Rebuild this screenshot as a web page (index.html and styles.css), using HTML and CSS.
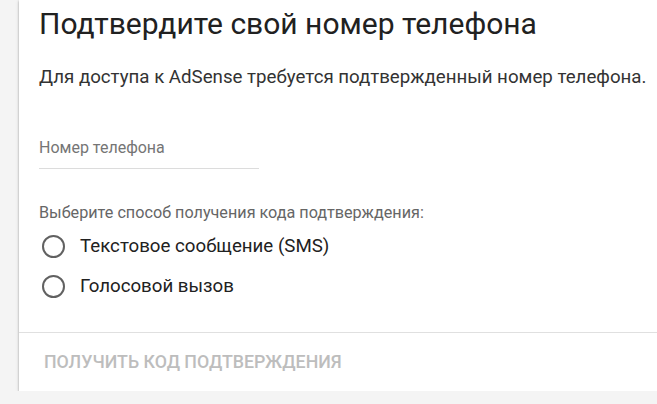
FILE: index.html
```html
<!DOCTYPE html>
<html lang="ru">
<head>
<meta charset="utf-8">
<link rel="stylesheet" href="styles.css">
</head>
<body>
<div class="card">
  <div class="content">
    <h1 class="title">Подтвердите свой номер телефона</h1>
    <p class="desc">Для доступа к AdSense требуется подтвержденный номер телефона.</p>
    <div class="field">
      <div class="placeholder">Номер телефона</div>
      <div class="underline"></div>
    </div>
    <div class="hint">Выберите способ получения кода подтверждения:</div>
    <div class="radios">
      <div class="radio"><span class="circle"></span><span class="label">Текстовое сообщение (SMS)</span></div>
      <div class="radio"><span class="circle"></span><span class="label">Голосовой вызов</span></div>
    </div>
  </div>
  <div class="actions">
    <span class="btn">Получить код подтверждения</span>
  </div>
</div>
</body>
</html>
```
FILE: styles.css
```css
html, body {
  margin: 0;
  padding: 0;
  background: #f4f4f4;
  font-family: Roboto, "Noto Sans", sans-serif;
  overflow: hidden;
}
.card {
  margin-left: 19px;
  width: 660px;
  background: #fff;
  box-shadow: 0 1px 2px rgba(0,0,0,0.3), 0 1px 4px rgba(0,0,0,0.12);
}
.content {
  padding: 4px 0 32px 20px;
}
.title {
  margin: 0;
  font-size: 30px;
  font-weight: 400;
  line-height: 40px;
  color: #212121;
}
.desc {
  margin: 19px 0 0;
  font-size: 18.7px;
  line-height: 28px;
  color: #333;
}
.field {
  margin-top: 45px;
  width: 220px;
}
.placeholder {
  font-size: 16px;
  line-height: 24px;
  color: #757575;
  padding-bottom: 8px;
}
.underline {
  height: 1px;
  background: #dcdcdc;
}
.hint {
  margin-top: 32px;
  font-size: 16.2px;
  line-height: 24px;
  color: #666;
}
.radios {
  margin-top: 7px;
  display: flex;
  flex-direction: column;
  gap: 12px;
}
.radio {
  display: flex;
  align-items: center;
  gap: 15px;
  padding-left: 3px;
  height: 28px;
}
.circle {
  width: 19px;
  height: 19px;
  border: 2px solid #616161;
  border-radius: 50%;
  flex: none;
}
.label {
  font-size: 18.7px;
  line-height: 28px;
  color: #212121;
}
.actions {
  border-top: 1px solid #e0e0e0;
  padding: 16px 0 16px 25px;
}
.btn {
  display: inline-block;
  font-size: 17.8px;
  line-height: 26px;
  font-weight: 500;
  text-transform: uppercase;
  color: #bdbdbd;
}
```
